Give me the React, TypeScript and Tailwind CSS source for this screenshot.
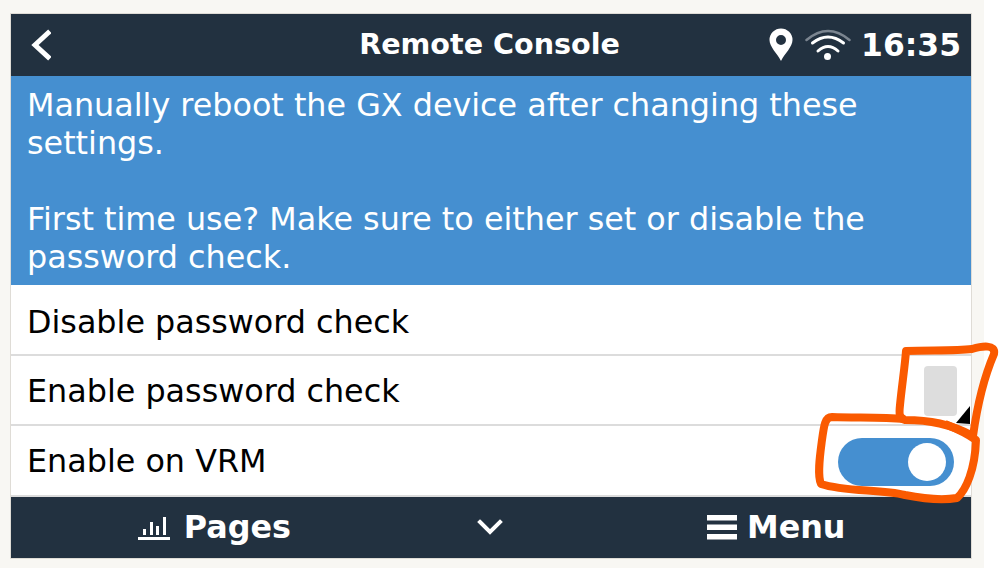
export default function App() {
    const rows = [
        { label: "Disable password check", height: "h-[71px]", labelPad: "pt-[4px]" },
        { label: "Enable password check", height: "h-[70px]", labelPad: "pt-[2px]" },
        { label: "Enable on VRM", height: "h-[71px]", labelPad: "pt-0" },
    ];

    return (
        <div className="relative flex h-[568px] w-[1001px] overflow-hidden bg-white font-['DejaVu_Sans',sans-serif]">
            <div className="h-full w-[984px] bg-[#f8f7f3] pl-[10px] pt-[13px]">
                <div className="flex h-[546px] w-[962px] flex-col border border-[#dfdcd6] bg-white">
                    {/* Header */}
                    <div className="relative flex h-[62px] shrink-0 items-center justify-between bg-[#223140] pl-[18px] pr-[10px] text-white">
                        <svg width="22" height="32" viewBox="0 0 22 32" fill="none" stroke="white" strokeWidth="5" strokeLinecap="square">
                            <path d="M19 4 L6 16 L19 28" />
                        </svg>
                        <div className="absolute left-0 right-0 top-[14px] text-center text-[28.6px] leading-[32px] font-bold text-white">
                            <span className="ml-[-3px]">Remote Console</span>
                        </div>
                        <div className="flex items-center">
                            <svg width="24" height="34" viewBox="0 0 24 34" className="mr-[12px]">
                                <path fillRule="evenodd" fill="white" d="M12 33 C8 25 0.5 19 0.5 12 A11.5 11.5 0 0 1 23.5 12 C23.5 19 16 25 12 33 Z M12 7 A5 5 0 1 0 12 17 A5 5 0 1 0 12 7 Z" />
                            </svg>
                            <svg width="46" height="32" viewBox="0 0 46 32" fill="none" strokeLinecap="round" className="mr-[10px]">
                                <path d="M1.5 11 Q23 -7 44.5 11" stroke="#7b8590" strokeWidth="2.5" />
                                <path d="M7.5 14 Q23 2 38.5 14" stroke="white" strokeWidth="3" />
                                <path d="M13 22 Q23 13 33 22" stroke="white" strokeWidth="3" />
                                <circle cx="22.5" cy="27.5" r="3.5" fill="white" />
                            </svg>
                            <span className="text-[31.4px] leading-[36px] font-bold">16:35</span>
                        </div>
                    </div>

                    {/* Notice */}
                    <div className="h-[209px] shrink-0 bg-[#458fd0] px-[16px] pt-[10px] text-[31.8px] leading-[38px] text-white">
                        <p>Manually reboot the GX device after changing these settings.</p>
                        <p className="mt-[38px]">First time use? Make sure to either set or disable the password check.</p>
                    </div>

                    {/* Rows */}
                    {rows.map((row, i) => (
                        <div key={row.label} className={`${row.height} flex shrink-0 items-center justify-between border-b-2 border-[#dcdcdc] pl-[16px] pr-[17px] text-[31.8px] text-black`}>
                            <span className={row.labelPad}>{row.label}</span>
                            {i === 1 && <div className="mr-[-3px] mt-[2px] h-[50px] w-[33px] rounded-[4px] bg-[#dddddd]" />}
                            {i === 2 && (
                                <div className="mt-[3px] flex h-[48px] w-[116px] items-center justify-end rounded-full bg-[#458fd0] pr-[8px]">
                                    <div className="h-[38px] w-[38px] rounded-full bg-white" />
                                </div>
                            )}
                        </div>
                    ))}

                    {/* Footer */}
                    <div className="flex h-[61px] shrink-0 items-center bg-[#223140] text-[31.8px] font-bold text-white">
                        <div className="flex w-[280px] items-center justify-end">
                            <svg width="32" height="26" viewBox="0 0 32 26" fill="white" className="mr-[14px]">
                                <rect x="0" y="22" width="32" height="3" />
                                <rect x="5" y="14" width="3" height="6" />
                                <rect x="12" y="7" width="3" height="13" />
                                <rect x="18" y="11" width="3" height="9" />
                                <rect x="25" y="2" width="3" height="18" />
                            </svg>
                            <span className="mt-[-2px]">Pages</span>
                        </div>
                        <div className="ml-[186px]">
                            <svg width="26" height="18" viewBox="0 0 26 18" fill="none" stroke="white" strokeWidth="4" strokeLinecap="square">
                                <path d="M3 3 L13 13 L23 3" />
                            </svg>
                        </div>
                        <div className="ml-[204px] flex items-center">
                            <svg width="30" height="25" viewBox="0 0 30 25" fill="white" className="mr-[10px]">
                                <rect x="0" y="0" width="30" height="5.5" />
                                <rect x="0" y="9.5" width="30" height="5.5" />
                                <rect x="0" y="19" width="30" height="5.5" />
                            </svg>
                            <span className="mt-[-2px]">Menu</span>
                        </div>
                    </div>
                </div>
            </div>

            {/* Hand drawn annotation */}
            <svg className="absolute left-0 top-0" width="1001" height="568" viewBox="0 0 1001 568" fill="none">
                <path d="M956 423 L970 406 L970 424 Z" fill="black" />
                <path
                    d="M906 351 C930 350 955 351 972 349 C982 346 996 344 994 354 C985 375 978 400 973 436 C950 424 930 420 905 420 C899 418 899 414 900 405 C902 385 905 365 906 351 Z"
                    stroke="#fa5a00"
                    strokeWidth="8"
                    strokeLinejoin="round"
                />
                <path
                    d="M905 419 C880 417 855 418 832 417 C825 417 824 425 822 440 C820 455 817 475 821 484 C845 492 880 489 905 495 C925 499 945 500 957 498 C966 490 975 470 976 440 C965 432 955 428 945 424"
                    stroke="#fa5a00"
                    strokeWidth="8"
                    strokeLinejoin="round"
                />
            </svg>
        </div>
    );
}
